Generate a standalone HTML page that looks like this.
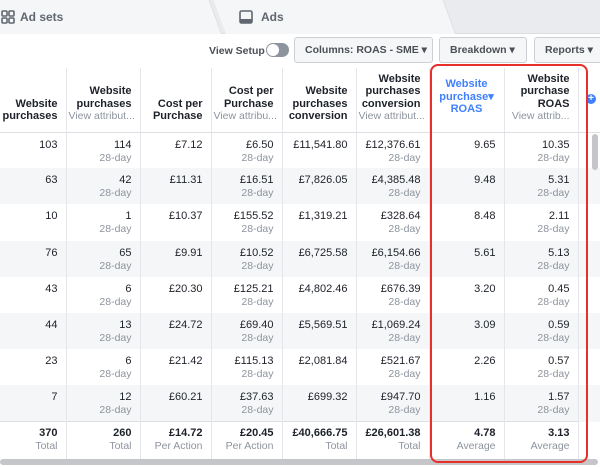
<!DOCTYPE html>
<html><head><style>
*{margin:0;padding:0;box-sizing:border-box}
body{width:600px;height:467px;overflow:hidden;background:#fff;font-family:"Liberation Sans",Arial,sans-serif;color:#1d2129;position:relative}
.tabs{position:absolute;left:0;top:0;width:600px;height:34px;background:#e9ebee;border-bottom:1px solid #dddfe2}
.tab1{position:absolute;left:-10px;top:0;width:232px;height:34px;background:#f5f6f7;border-right:1px solid #dddfe2;transform:skewX(20deg);transform-origin:bottom}
.tab2{position:absolute;left:226px;top:0;width:230px;height:34px;background:#f5f6f7;border-right:1px solid #dddfe2;transform:skewX(20deg);transform-origin:bottom}
.tl{position:absolute;top:10px;font-size:12px;font-weight:bold;color:#606770}
.btn{position:absolute;top:37px;height:26px;border:1px solid #ccd0d5;border-radius:3px;background:#f5f6f7;font-size:10.5px;font-weight:bold;color:#4b4f56;line-height:24px;padding-left:10px;white-space:nowrap;overflow:hidden}
table{position:absolute;left:0;top:68px;width:600px;border-collapse:collapse;table-layout:fixed}
td{border-right:1px solid #e4e6eb;text-align:right;padding:0 8px 0 2px;font-size:11px;color:#1d2129;vertical-align:top;overflow:hidden;white-space:nowrap}
tr.h td{height:64px;vertical-align:bottom;font-weight:bold;font-size:11px;line-height:12.5px;padding-bottom:9px;border-bottom:1px solid #dddfe2;white-space:normal}
tr.h .s{white-space:nowrap;display:block}
tr.r td{height:36.2px;padding-top:6px;line-height:13px}
tr.g td{background:#f5f6f7}
.s{color:#8d949e;font-weight:normal;font-size:10.5px}
tr.t td{height:38px;padding-top:5px;font-weight:bold;line-height:13px;border-top:1px solid #dddfe2}
</style></head><body>
<div class="tabs"><div class="tab1"></div><div class="tab2"></div></div>
<svg style="position:absolute;left:1px;top:10px" width="14" height="14" viewBox="0 0 14 14" fill="none" stroke="#606770" stroke-width="1.6"><rect x="1" y="1" width="5" height="5" rx="1"/><rect x="8" y="1" width="5" height="5" rx="1"/><rect x="1" y="8" width="5" height="5" rx="1"/><rect x="8" y="8" width="5" height="5" rx="1"/></svg>
<div class="tl" style="left:20px">Ad sets</div>
<svg style="position:absolute;left:239px;top:10px" width="14" height="14" viewBox="0 0 14 14"><rect x="1" y="1" width="12" height="12" rx="1.5" fill="none" stroke="#606770" stroke-width="1.6"/><rect x="1" y="9" width="12" height="4" fill="#606770"/></svg>
<div class="tl" style="left:261px">Ads</div>
<div style="position:absolute;left:209px;top:45px;font-size:10.5px;font-weight:bold;color:#4b4f56">View Setup</div>
<div style="position:absolute;left:266px;top:43px;width:23px;height:14px;border-radius:7px;background:#8d949e"><div style="position:absolute;left:1px;top:1px;width:12px;height:12px;border-radius:6px;background:#fff"></div></div>
<div class="btn" style="left:294px;width:139px">Columns: ROAS - SME ▾</div>
<div class="btn" style="left:439px;width:88px">Breakdown ▾</div>
<div class="btn" style="left:534px;width:80px">Reports ▾</div>
<table>
<colgroup><col style="width:66px"><col style="width:74px"><col style="width:71px"><col style="width:71px"><col style="width:74px"><col style="width:73px"><col style="width:75px"><col style="width:74px"><col style="width:22px"></colgroup>
<tr class="h"><td>Website purchases</td><td>Website purchases<span class="s">View attribut...</span></td><td>Cost per Purchase</td><td>Cost per Purchase<span class="s">View attribu...</span></td><td>Website purchases conversion</td><td>Website purchases conversion<span class="s">View attribut...</span></td><td style="color:#4080ff;text-align:center;padding:0 4px 16px">Website purchase▾ ROAS</td><td>Website purchase ROAS<span class="s">View attrib...</span></td><td style="border:none;border-bottom:1px solid #dddfe2"></td></tr>
<tr class="r"><td>103</td><td>114<br><span class="s">28-day</span></td><td>£7.12</td><td>£6.50<br><span class="s">28-day</span></td><td>£11,541.80</td><td>£12,376.61<br><span class="s">28-day</span></td><td>9.65</td><td>10.35<br><span class="s">28-day</span></td><td style="border:none"></td></tr>
<tr class="r g"><td>63</td><td>42<br><span class="s">28-day</span></td><td>£11.31</td><td>£16.51<br><span class="s">28-day</span></td><td>£7,826.05</td><td>£4,385.48<br><span class="s">28-day</span></td><td>9.48</td><td>5.31<br><span class="s">28-day</span></td><td style="border:none"></td></tr>
<tr class="r"><td>10</td><td>1<br><span class="s">28-day</span></td><td>£10.37</td><td>£155.52<br><span class="s">28-day</span></td><td>£1,319.21</td><td>£328.64<br><span class="s">28-day</span></td><td>8.48</td><td>2.11<br><span class="s">28-day</span></td><td style="border:none"></td></tr>
<tr class="r g"><td>76</td><td>65<br><span class="s">28-day</span></td><td>£9.91</td><td>£10.52<br><span class="s">28-day</span></td><td>£6,725.58</td><td>£6,154.66<br><span class="s">28-day</span></td><td>5.61</td><td>5.13<br><span class="s">28-day</span></td><td style="border:none"></td></tr>
<tr class="r"><td>43</td><td>6<br><span class="s">28-day</span></td><td>£20.30</td><td>£125.21<br><span class="s">28-day</span></td><td>£4,802.46</td><td>£676.39<br><span class="s">28-day</span></td><td>3.20</td><td>0.45<br><span class="s">28-day</span></td><td style="border:none"></td></tr>
<tr class="r g"><td>44</td><td>13<br><span class="s">28-day</span></td><td>£24.72</td><td>£69.40<br><span class="s">28-day</span></td><td>£5,569.51</td><td>£1,069.24<br><span class="s">28-day</span></td><td>3.09</td><td>0.59<br><span class="s">28-day</span></td><td style="border:none"></td></tr>
<tr class="r"><td>23</td><td>6<br><span class="s">28-day</span></td><td>£21.42</td><td>£115.13<br><span class="s">28-day</span></td><td>£2,081.84</td><td>£521.67<br><span class="s">28-day</span></td><td>2.26</td><td>0.57<br><span class="s">28-day</span></td><td style="border:none"></td></tr>
<tr class="r g"><td>7</td><td>12<br><span class="s">28-day</span></td><td>£60.21</td><td>£37.63<br><span class="s">28-day</span></td><td>£699.32</td><td>£947.70<br><span class="s">28-day</span></td><td>1.16</td><td>1.57<br><span class="s">28-day</span></td><td style="border:none"></td></tr>
<tr class="t"><td>370<br><span class="s">Total</span></td><td>260<br><span class="s">Total</span></td><td>£14.72<br><span class="s">Per Action</span></td><td>£20.45<br><span class="s">Per Action</span></td><td>£40,666.75<br><span class="s">Total</span></td><td>£26,601.38<br><span class="s">Total</span></td><td>4.78<br><span class="s">Average</span></td><td>3.13<br><span class="s">Average</span></td><td style="border:none"></td></tr>
</table>
<div style="position:absolute;left:586px;top:94px;width:10px;height:10px;border-radius:5px;background:#4080ff;color:#fff;font-size:10px;line-height:10px;text-align:center;font-weight:bold">+</div>
<div style="position:absolute;left:592px;top:134px;width:6px;height:36px;border-radius:3px;background:#c4c6ca"></div>
<div style="position:absolute;left:0;top:459px;width:598px;height:6px;border-radius:3px;background:#c4c6ca"></div>
<div style="position:absolute;left:430px;top:64px;width:158px;height:399px;border:2px solid #e8302a;border-radius:8px"></div>
</body></html>
